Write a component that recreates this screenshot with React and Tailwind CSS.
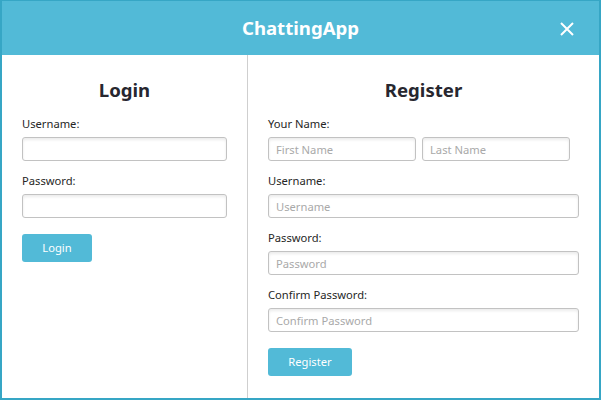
import React from 'react';

const font = { fontFamily: '"Segoe UI", "Noto Sans", sans-serif' };

const Field = ({ placeholder = '', className = 'w-full' }) => (
  <input
    placeholder={placeholder}
    className={`${className} block h-[24px] rounded-[3px] border border-[#c2c2c2] bg-white px-[7px] text-[11.2px] text-[#333] placeholder:text-[#a9a9a9] shadow-[inset_0_2px_3px_rgba(0,0,0,0.08)] outline-none`}
  />
);

const Label = ({ children }) => (
  <div className="mt-[10px] mb-[3px] h-[20px] text-[11.2px] leading-[20px] text-[#262626]">{children}</div>
);

export default function App() {
  return (
    <div className="flex h-[400px] w-[601px] flex-col border-x-2 border-b-2 border-t border-[#36a6c5] bg-white" style={font}>
      {/* Title bar */}
      <div className="relative flex h-[54px] shrink-0 items-center justify-center bg-[#52bad7]">
        <span className="text-[18.6px] font-bold text-white">ChattingApp</span>
        <svg className="absolute right-[25px] top-[21px]" width="14" height="14" viewBox="0 0 14 14">
          <path d="M1 1 L13 13 M13 1 L1 13" stroke="white" strokeWidth="2" />
        </svg>
      </div>

      <div className="flex flex-1">
        {/* Login */}
        <div className="flex w-[246px] flex-col border-r border-[#cfcfcf] px-[20px]">
          <h2 className="mt-[21px] h-[28px] text-center text-[18.6px] font-bold leading-[28px] text-[#27272f]">Login</h2>
          <Label>Username:</Label>
          <Field />
          <Label>Password:</Label>
          <Field />
          <button className="mt-[16px] h-[28px] w-[70px] rounded-[3px] bg-[#52bad7] text-[11.2px] text-white">Login</button>
        </div>

        {/* Register */}
        <div className="flex flex-1 flex-col px-[20px]">
          <h2 className="mt-[21px] h-[28px] text-center text-[18.6px] font-bold leading-[28px] text-[#27272f]">Register</h2>
          <Label>Your Name:</Label>
          <div className="flex gap-[6px]">
            <Field placeholder="First Name" className="w-[148px]" />
            <Field placeholder="Last Name" className="w-[148px]" />
          </div>
          <Label>Username:</Label>
          <Field placeholder="Username" />
          <Label>Password:</Label>
          <Field placeholder="Password" />
          <Label>Confirm Password:</Label>
          <Field placeholder="Confirm Password" />
          <button className="mt-[16px] h-[28px] w-[84px] rounded-[3px] bg-[#52bad7] text-[11.2px] text-white">Register</button>
        </div>
      </div>
    </div>
  );
}
